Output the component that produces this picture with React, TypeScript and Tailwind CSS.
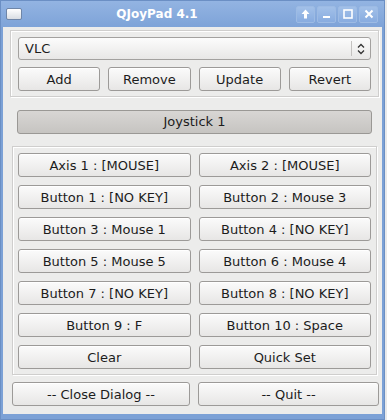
import React from 'react';

const font = { fontFamily: '"DejaVu Sans", sans-serif' };

const Btn = ({ label, className = '' }: { label: string; className?: string }) => (
  <button
    className={`h-[24px] rounded-[3px] border border-[#9c9a98] bg-gradient-to-b from-[#fbfbfb] to-[#e7e6e5] text-[13px] text-[#1c1c1c] leading-none shadow-[inset_0_1px_0_#ffffff] ${className}`}
  >
    {label}
  </button>
);

const TitleButton = ({ children }: { children: React.ReactNode }) => (
  <div className="w-[19px] h-[17px] rounded-[2px] border border-[#9dbbe4] bg-gradient-to-b from-[#a2c0e8] to-[#88ace0] flex items-center justify-center">
    {children}
  </div>
);

const mappings = [
  'Axis 1 : [MOUSE]',
  'Axis 2 : [MOUSE]',
  'Button 1 : [NO KEY]',
  'Button 2 : Mouse 3',
  'Button 3 : Mouse 1',
  'Button 4 : [NO KEY]',
  'Button 5 : Mouse 5',
  'Button 6 : Mouse 4',
  'Button 7 : [NO KEY]',
  'Button 8 : [NO KEY]',
  'Button 9 : F',
  'Button 10 : Space',
  'Clear',
  'Quick Set',
];

export default function App() {
  return (
    <div style={font} className="w-[387px] h-[420px] bg-[#e9e9e9]">
      <div className="w-[385px] h-[420px] flex flex-col bg-[#7ca1d6] border border-[#6b8fc4]">
        {/* title bar */}
        <div className="h-[26px] flex items-center pl-[5px] pr-[6px] bg-gradient-to-b from-[#93b4e2] to-[#7ea3d8]">
          <div className="w-[16px] h-[12px] rounded-[2px] border border-[#6f86a8] bg-gradient-to-b from-[#ffffff] to-[#d9dde3]" />
          <div className="flex-1 text-center text-white font-bold text-[12px] pr-[4px]">QJoyPad 4.1</div>
          <div className="flex gap-[2px]">
            <TitleButton>
              <svg width="9" height="10" viewBox="0 0 9 10"><path d="M4.5 0.5 L8.5 5 H6 V9.5 H3 V5 H0.5 Z" fill="#fff" /></svg>
            </TitleButton>
            <TitleButton>
              <svg width="9" height="9" viewBox="0 0 9 9"><rect x="1" y="6" width="7" height="2" fill="#fff" /></svg>
            </TitleButton>
            <TitleButton>
              <svg width="10" height="10" viewBox="0 0 10 10"><rect x="1" y="1" width="8" height="8" fill="none" stroke="#fff" strokeWidth="1.6" /></svg>
            </TitleButton>
            <TitleButton>
              <svg width="10" height="10" viewBox="0 0 10 10"><path d="M1.5 1.5 L8.5 8.5 M8.5 1.5 L1.5 8.5" stroke="#fff" strokeWidth="2" /></svg>
            </TitleButton>
          </div>
        </div>

        {/* content */}
        <div className="flex-1 mx-[2px] mb-[5px] bg-[#ececeb] flex flex-col pl-[7px] pr-[3px] pt-[3px]">
          {/* top group */}
          <div className="border border-[#cfcecd] shadow-[inset_1px_1px_0_#ffffff,1px_1px_0_#ffffff] px-[7px] pt-[6px] pb-[5px] flex flex-col gap-[7px]">
            <div className="h-[23px] rounded-[3px] border border-[#a3a19f] bg-gradient-to-b from-[#fcfcfc] to-[#e8e7e6] flex items-center">
              <span className="flex-1 pl-[6px] text-[13px] text-[#1c1c1c]">VLC</span>
              <div className="w-px h-[15px] bg-[#c4c2c0]" />
              <div className="w-[18px] flex justify-center">
                <svg width="8" height="12" viewBox="0 0 8 12">
                  <path d="M1 4.5 L4 1.5 L7 4.5 M1 7.5 L4 10.5 L7 7.5" fill="none" stroke="#333" strokeWidth="1.3" />
                </svg>
              </div>
            </div>
            <div className="grid grid-cols-4 gap-[8px]">
              <Btn label="Add" />
              <Btn label="Remove" />
              <Btn label="Update" />
              <Btn label="Revert" />
            </div>
          </div>

          {/* joystick tab */}
          <div className="mt-[13px] mx-[7px] h-[24px] rounded-[3px] border border-[#9a9895] bg-gradient-to-b from-[#d8d6d4] to-[#c6c4c1] flex items-center justify-center text-[13px] text-[#1c1c1c]">
            Joystick 1
          </div>

          {/* mappings group */}
          <div className="mt-[12px] ml-[2px] mr-[2px] border border-[#cfcecd] shadow-[inset_1px_1px_0_#ffffff,1px_1px_0_#ffffff] px-[5px] pt-[6px] pb-[5px] grid grid-cols-2 gap-x-[8px] gap-y-[8px]">
            {mappings.map((m) => (
              <Btn key={m} label={m} />
            ))}
          </div>

          {/* bottom buttons */}
          <div className="mt-[7px] ml-[2px] grid grid-cols-[178px_1fr] gap-[8px]">
            <Btn label="-- Close Dialog --" />
            <Btn label="-- Quit --" />
          </div>
        </div>
      </div>
    </div>
  );
}
